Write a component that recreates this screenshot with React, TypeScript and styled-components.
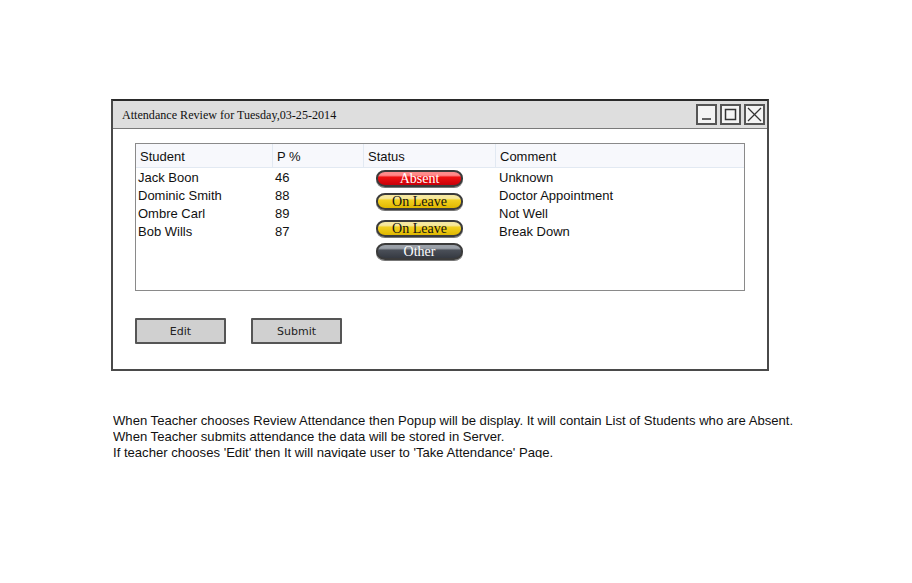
import React from "react";
import styled, { createGlobalStyle } from "styled-components";

const Global = createGlobalStyle`
  html, body { margin: 0; padding: 0; background: #fff; }
  body { font-family: "Liberation Sans", Arial, sans-serif; }
`;

const Page = styled.div`
  width: 912px;
  height: 583px;
  padding: 99px 0 0 111px;
  box-sizing: border-box;
  overflow: hidden;
`;

const Window = styled.div`
  width: 658px;
  height: 272px;
  box-sizing: border-box;
  border: 2px solid #4a4a4a;
  border-top-color: #2a2a2a;
  display: flex;
  flex-direction: column;
  background: #fff;
`;

const TitleBar = styled.div`
  height: 27px;
  background: #dedede;
  border-bottom: 1px solid #7a7a7a;
  display: flex;
  align-items: center;
  padding: 0 2px 0 9px;
  box-sizing: content-box;
`;

const Title = styled.div`
  flex: 1;
  font-family: "Liberation Serif", "Times New Roman", serif;
  font-size: 12.1px;
  padding-top: 1px;
  color: #111;
`;

const WinButtons = styled.div`
  display: flex;
  gap: 3px;
`;

const WinButton = styled.div`
  width: 17px;
  height: 17px;
  border: 2px solid #555;
  background: #f4f4f4;
  display: flex;
  align-items: center;
  justify-content: center;
`;

const Content = styled.div`
  padding: 14px 0 0 22px;
  display: flex;
  flex-direction: column;
`;

const TableBox = styled.div`
  width: 610px;
  height: 148px;
  box-sizing: border-box;
  border: 1px solid #8a8a8a;
  display: flex;
  flex-direction: column;
`;

const columns = "137px 91px 132px 1fr";

const HeaderRow = styled.div`
  display: grid;
  grid-template-columns: ${columns};
  height: 23px;
  background: #f7f8fc;
  border-bottom: 1px solid #e2e9f2;
`;

const HeaderCell = styled.div`
  display: flex;
  align-items: center;
  padding: 2px 0 0 4px;
  font-size: 13px;
  color: #111;
  border-right: 1px solid #e2e9f2;
  &:last-child { border-right: none; }
`;

const Body = styled.div`
  display: grid;
  grid-template-columns: ${columns};
  padding-top: 1px;
`;

const Col = styled.div<{ $pad: number }>`
  display: flex;
  flex-direction: column;
  padding-left: ${(p) => p.$pad}px;
`;

const Cell = styled.div`
  height: 18px;
  line-height: 18px;
  font-size: 13px;
  color: #111;
  white-space: nowrap;
`;

const StatusCol = styled.div`
  display: flex;
  flex-direction: column;
  padding-left: 12px;
  padding-top: 1px;
`;

const pillColors: Record<string, { top: string; mid: string; bot: string; text: string }> = {
  red: { top: "#ff8a8a", mid: "#ee1010", bot: "#c8000a", text: "#fff" },
  yellow: { top: "#f6e8a0", mid: "#f2d020", bot: "#e0b800", text: "#111" },
  dark: { top: "#9aa0a8", mid: "#4a4f58", bot: "#363a42", text: "#fff" },
};

const Pill = styled.div<{ $c: string; $mt: number }>`
  width: 87px;
  height: 17px;
  margin-top: ${(p) => p.$mt}px;
  box-sizing: border-box;
  border: 2px solid #3b3b3b;
  border-radius: 9px / 8px;
  box-shadow: 0 1px 0 #777;
  background: linear-gradient(
    to bottom,
    ${(p) => pillColors[p.$c].top} 0%,
    ${(p) => pillColors[p.$c].top} 25%,
    ${(p) => pillColors[p.$c].mid} 40%,
    ${(p) => pillColors[p.$c].bot} 100%
  );
  color: ${(p) => pillColors[p.$c].text};
  font-family: "Liberation Serif", "Times New Roman", serif;
  font-size: 14px;
  line-height: 14px;
  text-align: center;
`;

const ButtonRow = styled.div`
  display: flex;
  gap: 25px;
  margin-top: 27px;
`;

const SketchButton = styled.div`
  width: 91px;
  height: 26px;
  box-sizing: border-box;
  border: 2px solid #555;
  border-radius: 1px;
  background: #d0d0d0;
  display: flex;
  align-items: center;
  justify-content: center;
  font-family: "DejaVu Sans", sans-serif;
  font-size: 11px;
  color: #222;
`;

const Notes = styled.div`
  margin: 42px 0 0 2px;
  height: 45px;
  overflow: hidden;
  font-size: 13.1px;
  line-height: 16px;
  color: #111;
`;

const students = [
  { name: "Jack Boon", p: "46", comment: "Unknown" },
  { name: "Dominic Smith", p: "88", comment: "Doctor Appointment" },
  { name: "Ombre Carl", p: "89", comment: "Not Well" },
  { name: "Bob Wills", p: "87", comment: "Break Down" },
];

const statuses = [
  { label: "Absent", c: "red", mt: 0 },
  { label: "On Leave", c: "yellow", mt: 6 },
  { label: "On Leave", c: "yellow", mt: 10 },
  { label: "Other", c: "dark", mt: 6 },
];

export default function App() {
  return (
    <Page>
      <Global />
      <Window>
        <TitleBar>
          <Title>Attendance Review for Tuesday,03-25-2014</Title>
          <WinButtons>
            <WinButton>
              <svg width="13" height="13" viewBox="0 0 13 13">
                <line x1="2" y1="11" x2="11" y2="11" stroke="#333" strokeWidth="1.5" />
              </svg>
            </WinButton>
            <WinButton>
              <svg width="13" height="13" viewBox="0 0 13 13">
                <rect x="1.5" y="1.5" width="10" height="10" fill="none" stroke="#333" strokeWidth="1.5" />
              </svg>
            </WinButton>
            <WinButton>
              <svg width="15" height="15" viewBox="0 0 15 15">
                <line x1="1" y1="1" x2="14" y2="14" stroke="#333" strokeWidth="1.3" />
                <line x1="14" y1="1" x2="1" y2="14" stroke="#333" strokeWidth="1.3" />
              </svg>
            </WinButton>
          </WinButtons>
        </TitleBar>
        <Content>
          <TableBox>
            <HeaderRow>
              <HeaderCell>Student</HeaderCell>
              <HeaderCell>P %</HeaderCell>
              <HeaderCell>Status</HeaderCell>
              <HeaderCell>Comment</HeaderCell>
            </HeaderRow>
            <Body>
              <Col $pad={2}>
                {students.map((s) => (
                  <Cell key={s.name}>{s.name}</Cell>
                ))}
              </Col>
              <Col $pad={2}>
                {students.map((s) => (
                  <Cell key={s.name}>{s.p}</Cell>
                ))}
              </Col>
              <StatusCol>
                {statuses.map((s, i) => (
                  <Pill key={i} $c={s.c} $mt={s.mt}>
                    {s.label}
                  </Pill>
                ))}
              </StatusCol>
              <Col $pad={3}>
                {students.map((s) => (
                  <Cell key={s.name}>{s.comment}</Cell>
                ))}
              </Col>
            </Body>
          </TableBox>
          <ButtonRow>
            <SketchButton>Edit</SketchButton>
            <SketchButton>Submit</SketchButton>
          </ButtonRow>
        </Content>
      </Window>
      <Notes>
        When Teacher chooses Review Attendance then Popup will be display. It will contain List of Students who are Absent.
        <br />
        When Teacher submits attendance the data will be stored in Server.
        <br />
        If teacher chooses 'Edit' then It will navigate user to 'Take Attendance' Page.
      </Notes>
    </Page>
  );
}
